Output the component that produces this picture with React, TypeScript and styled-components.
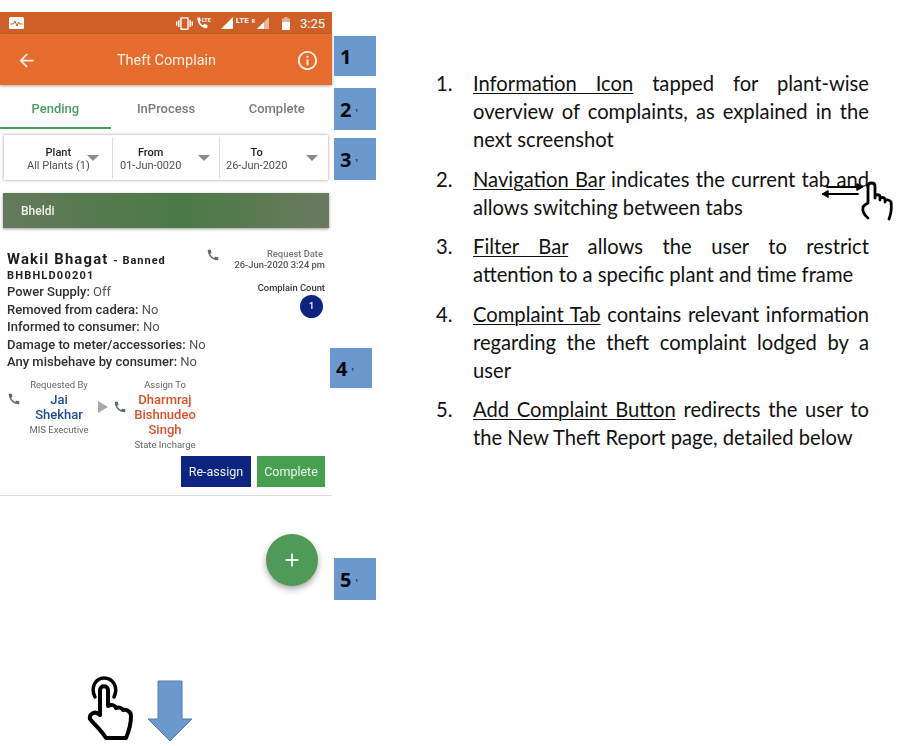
import styled, { createGlobalStyle } from "styled-components";
import { MdAdd, MdArrowBack, MdCall, MdInfoOutline, MdVibration } from "react-icons/md";

const GlobalStyle = createGlobalStyle`
  html, body {
    margin: 0;
    background: #fff;
  }
`;

const Page = styled.div`
  position: relative;
  width: 906px;
  height: 746px;
  overflow: hidden;
  display: flex;
`;

const LeftColumn = styled.div`
  width: 332px;
  flex-shrink: 0;
  padding-top: 12px;
  display: flex;
  flex-direction: column;
`;

const Phone = styled.div`
  height: 576px;
  font-family: Roboto, sans-serif;
  filter: blur(0.35px);
  position: relative;
`;

const StatusBar = styled.div`
  height: 22px;
  background: #cf5f27;
  color: #fff;
  display: flex;
  align-items: center;
  padding: 0 7px 0 9px;
  font-size: 13px;
`;

const StatusIcons = styled.div`
  margin-left: auto;
  display: flex;
  align-items: center;
`;

const StatusGap = styled.span<{ $width: number }>`
  width: ${(p) => p.$width}px;
`;

const LteLabel = styled.span`
  font-size: 8px;
  font-weight: 700;
  margin: -5px 2px 0 3px;
  white-space: nowrap;
  small {
    font-size: 5px;
    margin-left: 3px;
  }
`;

const AppBar = styled.div`
  height: 51px;
  background: #e66c2e;
  color: #fdf0e6;
  display: flex;
  align-items: center;
  justify-content: space-between;
  padding: 2px 13px 0 16px;
  box-sizing: border-box;
  box-shadow: 0 1px 3px rgba(0, 0, 0, 0.35);
  font-size: 14.5px;
`;

const Tabs = styled.div`
  display: flex;
  height: 43px;
  margin-top: 1px;
`;

const Tab = styled.div<{ $active?: boolean }>`
  flex: 1;
  display: flex;
  align-items: center;
  justify-content: center;
  padding-top: 3px;
  box-sizing: border-box;
  font-size: 13px;
  font-weight: 500;
  color: ${(p) => (p.$active ? "#4b9a62" : "#7a7a7a")};
  border-bottom: 2px solid ${(p) => (p.$active ? "#4b9a62" : "transparent")};
`;

const FilterCard = styled.div`
  margin: 6px 4px 0;
  height: 45px;
  display: flex;
  align-items: center;
  background: #fff;
  box-shadow: 0 0 3px rgba(0, 0, 0, 0.4);
`;

const Filter = styled.div<{ $width: number; $pad: number }>`
  width: ${(p) => p.$width}px;
  height: 41px;
  display: flex;
  align-items: center;
  padding: 2px 0 0 ${(p) => p.$pad}px;
  box-sizing: border-box;
  border-left: 1px solid #ddd;
  position: relative;
  &:first-child {
    border-left: 0;
  }
`;

const FilterText = styled.div`
  text-align: center;
  font-size: 11px;
  line-height: 13px;
  color: #4f4f4f;
  white-space: nowrap;
  strong {
    display: block;
    font-weight: 500;
    color: #222;
  }
`;

const Caret = styled.span<{ $right: number }>`
  position: absolute;
  right: ${(p) => p.$right}px;
  top: 18px;
  width: 0;
  height: 0;
  border-left: 6px solid transparent;
  border-right: 6px solid transparent;
  border-top: 6px solid #8c8c8c;
`;

const GroupHeader = styled.div`
  margin: 13px 3px 0;
  height: 35px;
  padding-left: 18px;
  display: flex;
  align-items: center;
  font-size: 12px;
  font-weight: 500;
  color: #eef2ea;
  background: linear-gradient(90deg, #65795d 0%, #4a7a45 55%, #6c7a60 100%);
  box-shadow: 0 1px 3px rgba(0, 0, 0, 0.4);
`;

const Complaint = styled.div`
  margin-top: 15px;
  padding: 0 7px 8px;
  border-bottom: 1px solid #ddd;
`;

const ComplaintTop = styled.div`
  display: flex;
  justify-content: space-between;
`;

const Name = styled.div`
  margin-top: 8px;
  font-size: 14.8px;
  font-weight: 700;
  letter-spacing: 1.2px;
  color: #1c1c1c;
  line-height: 17px;
  white-space: nowrap;
  small {
    font-size: 11px;
    letter-spacing: 1px;
  }
`;

const Code = styled.div`
  margin: -2px 0 -1px;
  font-size: 11px;
  font-weight: 700;
  letter-spacing: 1.2px;
  color: #222;
  line-height: 17px;
`;

const Detail = styled.div`
  font-size: 13px;
  line-height: 17.5px;
  color: #555;
  white-space: nowrap;
  b {
    font-weight: 500;
    color: #2f2f2f;
  }
`;

const PhoneGlyph = styled(MdCall)`
  color: #5f6a6a;
  font-size: 14px;
  flex-shrink: 0;
`;

const TopRight = styled.div`
  display: flex;
  align-items: flex-start;
  gap: 14px;
  margin-left: -4px;
  padding-top: 5px;
`;

const RequestInfo = styled.div`
  display: flex;
  flex-direction: column;
  align-items: flex-end;
  font-size: 9.4px;
  font-weight: 500;
  line-height: 11px;
  color: #777;
  white-space: nowrap;
`;

const RequestLabel = styled.div`
  margin-right: 2px;
`;

const RequestDate = styled.div`
  color: #555;
`;

const CountLabel = styled.div`
  margin-top: 12px;
  color: #333;
`;

const CountBubble = styled.div`
  margin: 2px 2px 0 0;
  width: 23px;
  height: 23px;
  border-radius: 50%;
  background: #0d2580;
  color: #fff;
  font-size: 9px;
  display: flex;
  align-items: center;
  justify-content: center;
`;

const People = styled.div`
  display: flex;
  margin-top: 6px;
`;

const Person = styled.div<{ $width: number }>`
  width: ${(p) => p.$width}px;
  display: flex;
  flex-direction: column;
  align-items: center;
  text-align: center;
`;

const PersonRole = styled.div`
  font-size: 9.5px;
  line-height: 15px;
  color: #666;
  white-space: nowrap;
`;

const PersonName = styled.div<{ $color: string }>`
  font-size: 13px;
  font-weight: 500;
  line-height: 15px;
  color: ${(p) => p.$color};
`;

const CallSlot = styled.div<{ $top: number; $left: number; $width: number }>`
  width: ${(p) => p.$width}px;
  box-sizing: border-box;
  padding: ${(p) => p.$top}px 0 0 ${(p) => p.$left}px;
  display: flex;
  align-items: flex-start;
`;

const PlayMark = styled.span`
  width: 0;
  height: 0;
  margin: 1px 5px 0 0;
  border-top: 6px solid transparent;
  border-bottom: 6px solid transparent;
  border-left: 10px solid #a3aca6;
`;

const Actions = styled.div`
  display: flex;
  justify-content: flex-end;
  gap: 6px;
  margin-top: 4px;
`;

const ActionButton = styled.button<{ $bg: string; $width: number }>`
  width: ${(p) => p.$width}px;
  height: 31px;
  padding: 0;
  border: 0;
  background: ${(p) => p.$bg};
  color: #eef3ee;
  font-family: Roboto, sans-serif;
  font-size: 12.5px;
`;

const Fab = styled.div`
  position: absolute;
  left: 266px;
  top: 522px;
  width: 52px;
  height: 52px;
  border-radius: 50%;
  background: #4f9a58;
  color: #f2f7f2;
  display: flex;
  align-items: center;
  justify-content: center;
  font-size: 22px;
  box-shadow: 0 3px 6px rgba(0, 0, 0, 0.35);
`;

const Gesture = styled.div`
  margin: 90px 0 0 87px;
  display: flex;
  gap: 13px;
  align-items: flex-start;
`;

const ArrowSlot = styled.div`
  margin-top: 5px;
`;

const BadgeColumn = styled.div`
  width: 44px;
  margin-left: 2px;
  flex-shrink: 0;
  display: flex;
  flex-direction: column;
  align-items: flex-start;
  padding-top: 36px;
`;

const Badge = styled.div<{ $top: number; $height: number; $shift?: number }>`
  margin-top: ${(p) => p.$top}px;
  margin-left: ${(p) => p.$shift ?? 0}px;
  width: 42px;
  height: ${(p) => p.$height}px;
  padding-left: 6px;
  box-sizing: border-box;
  background: #6b98cf;
  color: #0a0a0a;
  font-family: "Open Sans", sans-serif;
  font-size: 20px;
  font-weight: 700;
  display: flex;
  align-items: center;
  small {
    font-size: 4px;
    margin: 3px 0 0 4px;
  }
`;

const Notes = styled.ol`
  margin: 0 0 0 58px;
  padding: 69px 0 0;
  width: 433px;
  list-style: none;
  counter-reset: note;
  font-family: Lato, sans-serif;
  font-size: 20.2px;
  line-height: 28px;
  color: #111;
`;

const Note = styled.li`
  counter-increment: note;
  position: relative;
  padding-left: 37px;
  margin-bottom: 11.5px;
  text-align: justify;
  &::before {
    content: counter(note) ".";
    position: absolute;
    left: 0;
  }
  u {
    text-underline-offset: 2px;
    text-decoration-thickness: 1px;
  }
`;

const JustifiedLine = styled.span`
  display: block;
  text-align-last: justify;
`;

const SwipeGesture = styled.div`
  position: absolute;
  left: 822px;
  top: 178px;
`;

const ActivityIcon = () => (
  <svg width="15" height="12" viewBox="0 0 15 12">
    <rect width="15" height="12" rx="1.5" fill="#fff" />
    <path d="M1.5 7h3l1.5-3 2 5 1.5-4 1 2h3" fill="none" stroke="#cf5f27" strokeWidth="1" />
  </svg>
);

const SignalIcon = ({ dim }: { dim?: boolean }) => (
  <svg width="12" height="12" viewBox="0 0 12 12">
    <path d="M12 0v12H0z" fill="#fff" opacity={dim ? 0.55 : 1} />
    {dim && <path d="M7 5v7H0z" fill="#fff" />}
  </svg>
);

const BatteryIcon = () => (
  <svg width="8" height="13" viewBox="0 0 8 13">
    <path d="M2.5 0h3v1.5H8V13H0V1.5h2.5z" fill="#fff" opacity="0.5" />
    <rect y="5" width="8" height="8" fill="#fff" />
  </svg>
);

const PhoneLte = () => (
  <svg width="17" height="14" viewBox="0 0 17 14">
    <path
      d="M2 1.5h2l1 3-1.3 1.2c.7 1.6 1.9 2.8 3.4 3.5L8.4 8l3 1v2.3c0 .6-.4.9-1 .9C5.500 12 1.500 7.800 1.300 2.300c0-.5.200-.8.700-.8z"
      fill="#fff"
    />
    <text x="6" y="5.500" fontSize="5.500" fontWeight="700" fill="#fff">
      LTE
    </text>
  </svg>
);

const HandIcon = () => (
  <svg width="47" height="66" viewBox="0 0 47 66" fill="none" stroke="#000" strokeLinejoin="round" strokeLinecap="round">
    <path d="M8 22C3 12 9 3 17 3s15 8 10 19" strokeWidth="3.500" />
    <path
      d="M13 40V15c0-5 8-5 8 0v16c3-2 7-1 8 2 3-1 6 0 7 2 4-1 8 2 8 6 0 8-2 15-5 22H19C14 55 8 50 3 44c-1-5 5-9 10-4z"
      strokeWidth="4"
      fill="#fff"
    />
  </svg>
);

const DownArrow = () => (
  <svg width="46" height="62" viewBox="0 0 46 62">
    <path d="M11 1h24v38h10L23 61 1 39h10z" fill="#6b98cf" stroke="#4f7cb0" strokeWidth="1" />
  </svg>
);

const SwipeIcon = () => (
  <svg width="74" height="44" viewBox="0 0 74 44" fill="none" stroke="#000" strokeLinecap="round" strokeLinejoin="round">
    <path d="M5 9h35" strokeWidth="1.800" />
    <path d="M35 6l5 3-5 3z" strokeWidth="1.500" fill="#000" />
    <path d="M36 16H1" strokeWidth="1.800" />
    <path d="M6 13l-5 3 5 3z" strokeWidth="1.500" fill="#000" />
    <path
      d="M46 40c-4-3-6-6-5-11 1-2 3-3 5-4V8c0-4 7-4 7 0v12M53 20v-1c0-3 5-3 5 0v3M58 21c0-2 4-2 5 0v3M63 23c1-2 5-1 6 1 1 7 0 12-2 17"
      strokeWidth="2.800"
    />
  </svg>
);

const App = () => {
  return (
    <Page>
      <GlobalStyle />
      <LeftColumn>
        <Phone>
          <StatusBar>
            <ActivityIcon />
            <StatusIcons>
              <MdVibration size={17} />
              <StatusGap $width={3} />
              <PhoneLte />
              <StatusGap $width={8} />
              <SignalIcon />
              <LteLabel>
                LTE<small>R</small>
              </LteLabel>
              <SignalIcon dim />
              <StatusGap $width={13} />
              <BatteryIcon />
              <StatusGap $width={10} />
              3:25
            </StatusIcons>
          </StatusBar>
          <AppBar>
            <MdArrowBack size={21} />
            <span>Theft Complain</span>
            <MdInfoOutline size={23} />
          </AppBar>
          <Tabs>
            <Tab $active>Pending</Tab>
            <Tab>InProcess</Tab>
            <Tab>Complete</Tab>
          </Tabs>
          <FilterCard>
            <Filter $width={108} $pad={23}>
              <FilterText>
                <strong>Plant</strong>
                All Plants (1)
              </FilterText>
              <Caret $right={13} />
            </Filter>
            <Filter $width={107} $pad={7}>
              <FilterText>
                <strong>From</strong>
                01-Jun-0020
              </FilterText>
              <Caret $right={9} />
            </Filter>
            <Filter $width={109} $pad={6}>
              <FilterText>
                <strong>To</strong>
                26-Jun-2020
              </FilterText>
              <Caret $right={10} />
            </Filter>
          </FilterCard>
          <GroupHeader>Bheldi</GroupHeader>
          <Complaint>
            <ComplaintTop>
              <div>
                <Name>
                  Wakil Bhagat <small>- Banned</small>
                </Name>
                <Code>BHBHLD00201</Code>
                <Detail><b>Power Supply:</b> Off</Detail>
                <Detail><b>Removed from cadera:</b> No</Detail>
                <Detail><b>Informed to consumer:</b> No</Detail>
                <Detail><b>Damage to meter/accessories:</b> No</Detail>
                <Detail><b>Any misbehave by consumer:</b> No</Detail>
              </div>
              <TopRight>
                <PhoneGlyph />
                <RequestInfo>
                  <RequestLabel>Request Date</RequestLabel>
                  <RequestDate>26-Jun-2020 3:24 pm</RequestDate>
                  <CountLabel>Complain Count</CountLabel>
                  <CountBubble>1</CountBubble>
                </RequestInfo>
              </TopRight>
            </ComplaintTop>
            <People>
              <CallSlot $top={15} $left={0} $width={22}>
                <PhoneGlyph />
              </CallSlot>
              <Person $width={60}>
                <PersonRole>Requested By</PersonRole>
                <PersonName $color="#1e4a9a">Jai Shekhar</PersonName>
                <PersonRole>MIS Executive</PersonRole>
              </Person>
              <CallSlot $top={23} $left={9} $width={43}>
                <PlayMark />
                <PhoneGlyph />
              </CallSlot>
              <Person $width={66}>
                <PersonRole>Assign To</PersonRole>
                <PersonName $color="#d9512a">Dharmraj Bishnudeo Singh</PersonName>
                <PersonRole>State Incharge</PersonRole>
              </Person>
            </People>
            <Actions>
              <ActionButton $bg="#0d2580" $width={70}>Re-assign</ActionButton>
              <ActionButton $bg="#47a04f" $width={68}>Complete</ActionButton>
            </Actions>
          </Complaint>
          <Fab>
            <MdAdd />
          </Fab>
        </Phone>
        <Gesture>
          <HandIcon />
          <ArrowSlot>
            <DownArrow />
          </ArrowSlot>
        </Gesture>
      </LeftColumn>
      <BadgeColumn>
        <Badge $top={0} $height={40}>1</Badge>
        <Badge $top={12} $height={42}>2<small>1</small></Badge>
        <Badge $top={8} $height={42}>3<small>1</small></Badge>
        <Badge $top={168} $height={40} $shift={-4}>4<small>1</small></Badge>
        <Badge $top={170} $height={42}>5<small>1</small></Badge>
      </BadgeColumn>
      <Notes>
        <Note>
          <u>Information Icon</u> tapped for plant-wise overview of complaints, as explained in the next screenshot
        </Note>
        <Note>
          <u>Navigation Bar</u> indicates the current tab and allows switching between tabs
        </Note>
        <Note>
          <JustifiedLine>
            <u>Filter Bar</u> allows the user to restrict
          </JustifiedLine>
          attention to a specific plant and time frame
        </Note>
        <Note>
          <u>Complaint Tab</u> contains relevant information regarding the theft complaint lodged by a user
        </Note>
        <Note>
          <u>Add Complaint Button</u> redirects the user to the New Theft Report page, detailed below
        </Note>
      </Notes>
      <SwipeGesture>
        <SwipeIcon />
      </SwipeGesture>
    </Page>
  );
};

export default App;
